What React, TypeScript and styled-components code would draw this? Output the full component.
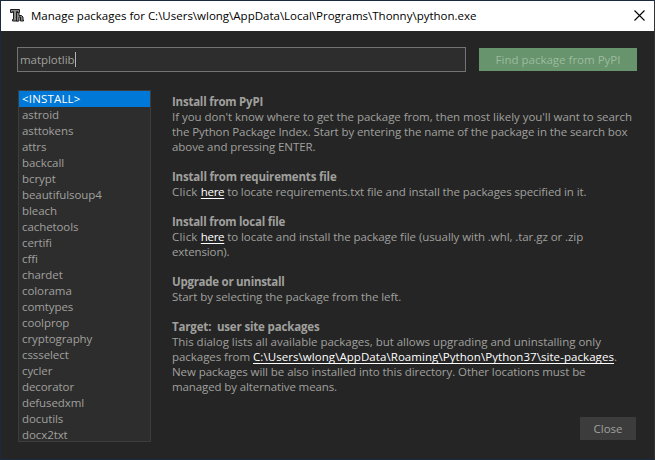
import React from 'react';
import styled, { createGlobalStyle } from 'styled-components';

const GlobalStyle = createGlobalStyle`
  * { box-sizing: border-box; }
  body { margin: 0; background: #252525; }
`;

const Dialog = styled.div`
  display: flex;
  flex-direction: column;
  width: 655px;
  height: 460px;
  overflow: hidden;
  background: #252525;
  border: 1px solid #1b2a3e;
  border-right-color: #303234;
  color: #a0a09e;
  font: 11.5px/15px "Open Sans", "Noto Sans", sans-serif;
`;

const TitleBar = styled.header`
  display: flex;
  align-items: center;
  flex: 0 0 30px;
  padding: 0 9px 2px 8px;
  background: #fff;
  color: #000;
`;

const LogoIcon = styled.svg`
  width: 16px;
  height: 16px;
  margin-right: 6px;
`;

const Title = styled.h1`
  flex: 1;
  margin: 0;
  font: inherit;
  white-space: nowrap;
`;

const CloseIcon = styled.svg`
  width: 11px;
  height: 11px;
`;

const SearchRow = styled.div`
  display: flex;
  align-items: center;
  gap: 13px;
  padding: 16px 16px 0;
`;

const SearchBox = styled.div`
  display: flex;
  align-items: center;
  width: 449px;
  height: 25px;
  padding-left: 2px;
  border: 1px solid #737373;
  background: #2d2d2d;
  letter-spacing: -0.04px;
`;

const Caret = styled.span`
  width: 1px;
  height: 15px;
  background: #b4b4b4;
`;

const Button = styled.button<{ $primary?: boolean }>`
  display: flex;
  align-items: center;
  justify-content: center;
  width: ${p => (p.$primary ? 158 : 56)}px;
  height: 23px;
  padding: 0;
  border: 0;
  background: ${p => (p.$primary ? '#67936d' : '#3c3c3c')};
  color: ${p => (p.$primary ? '#9dbb9d' : '#a0a09e')};
  font: inherit;
`;

const Content = styled.main`
  display: flex;
  gap: 21px;
  padding: 18px 17px 0;
`;

const PackageList = styled.ul`
  width: 133px;
  height: 352px;
  margin: 0;
  padding: 0;
  overflow: hidden;
  list-style: none;
  border: 1px solid #3d3d3d;
  background: #2d2d2d;
`;

const PackageItem = styled.li<{ $selected?: boolean; $tracking?: number }>`
  height: 16px;
  padding-left: 3px;
  line-height: 16px;
  letter-spacing: ${p => p.$tracking ?? -0.08}px;
  background: ${p => (p.$selected ? '#0078d7' : 'transparent')};
  color: ${p => (p.$selected ? '#fff' : 'inherit')};
`;

const Info = styled.div`
  display: flex;
  flex-direction: column;
  gap: 15px;
  padding-top: 4px;
`;

const Section = styled.section`
  display: flex;
  flex-direction: column;
`;

const Heading = styled.h2<{ $tracking: number }>`
  height: 15px;
  margin: 0;
  font: inherit;
  font-weight: 700;
  white-space: pre;
  letter-spacing: ${p => p.$tracking}px;
`;

const Line = styled.div<{ $tracking: number }>`
  height: 15px;
  white-space: nowrap;
  letter-spacing: ${p => p.$tracking}px;
`;

const Lead = styled.span`
  letter-spacing: 0.2px;
`;

const Link = styled.a<{ $tracking: number }>`
  color: #fff;
  text-decoration: underline;
  text-decoration-thickness: 1px;
  text-underline-offset: 2px;
  text-decoration-skip-ink: none;
  letter-spacing: ${p => p.$tracking}px;
`;

const Footer = styled.footer`
  display: flex;
  justify-content: flex-end;
  margin-top: -25px;
  padding-right: 18px;
`;

const packages = [
  'astroid', 'asttokens', 'attrs', 'backcall', 'bcrypt', 'beautifulsoup4', 'bleach',
  'cachetools', 'certifi', 'cffi', 'chardet', 'colorama', 'comtypes', 'coolprop',
  'cryptography', 'cssselect', 'cycler', 'decorator', 'defusedxml', 'docutils', 'docx2txt',
];

export default function App() {
  return (
    <>
      <GlobalStyle />
      <Dialog>
        <TitleBar>
          <LogoIcon viewBox="0 0 16 16">
            <path d="M1.500 2.500h9v3h-2v-1H7.500v8h1v1.500H3.500v-1.500h1v-8h-1v1h-2z" fill="#8a8a8a" stroke="#1c1c1c" />
            <path d="M7.500 5.500h2.500v3h2.500l1.500 1.500v3h.5v1h-3v-4H10v4H7.500z" fill="#8a8a8a" stroke="#1c1c1c" />
          </LogoIcon>
          <Title>Manage packages for C:\Users\wlong\AppData\Local\Programs\Thonny\python.exe</Title>
          <CloseIcon viewBox="0 0 11 11">
            <path d="M.5.5l10 10M10.500.5l-10 10" stroke="#000" strokeWidth="1.100" />
          </CloseIcon>
        </TitleBar>
        <SearchRow>
          <SearchBox>matplotlib<Caret /></SearchBox>
          <Button $primary>Find package from PyPI</Button>
        </SearchRow>
        <Content>
          <PackageList>
            <PackageItem $selected $tracking={0.17}>&lt;INSTALL&gt;</PackageItem>
            {packages.map(name => <PackageItem key={name}>{name}</PackageItem>)}
          </PackageList>
          <Info>
            <Section>
              <Heading $tracking={-0.23}>Install from PyPI</Heading>
              <Line $tracking={-0.037}>If you don't know where to get the package from, then most likely you'll want to search</Line>
              <Line $tracking={-0.101}>the Python Package Index. Start by entering the name of the package in the search box</Line>
              <Line $tracking={-0.069}>above and pressing ENTER.</Line>
            </Section>
            <Section>
              <Heading $tracking={-0.186}>Install from requirements file</Heading>
              <Line $tracking={-0.1}>
                <Lead>Click </Lead><Link $tracking={-0.3}>here</Link> to locate requirements.txt file and install the packages specified in it.
              </Line>
            </Section>
            <Section>
              <Heading $tracking={-0.232}>Install from local file</Heading>
              <Line $tracking={-0.065}>
                <Lead>Click </Lead><Link $tracking={-0.3}>here</Link> to locate and install the package file (usually with .whl, .tar.gz or .zip
              </Line>
              <Line $tracking={-0.123}>extension).</Line>
            </Section>
            <Section>
              <Heading $tracking={-0.269}>Upgrade or uninstall</Heading>
              <Line $tracking={-0.065}>Start by selecting the package from the left.</Line>
            </Section>
            <Section>
              <Heading $tracking={-0.162}>{'Target:  user site packages'}</Heading>
              <Line $tracking={-0.027}>This dialog lists all available packages, but allows upgrading and uninstalling only</Line>
              <Line $tracking={-0.047}>
                packages from <Link $tracking={0.065}>C:\Users\wlong\AppData\Roaming\Python\Python37\site-packages</Link>.
              </Line>
              <Line $tracking={-0.072}>New packages will be also installed into this directory. Other locations must be</Line>
              <Line $tracking={-0.111}>managed by alternative means.</Line>
            </Section>
          </Info>
        </Content>
        <Footer>
          <Button>Close</Button>
        </Footer>
      </Dialog>
    </>
  );
}
